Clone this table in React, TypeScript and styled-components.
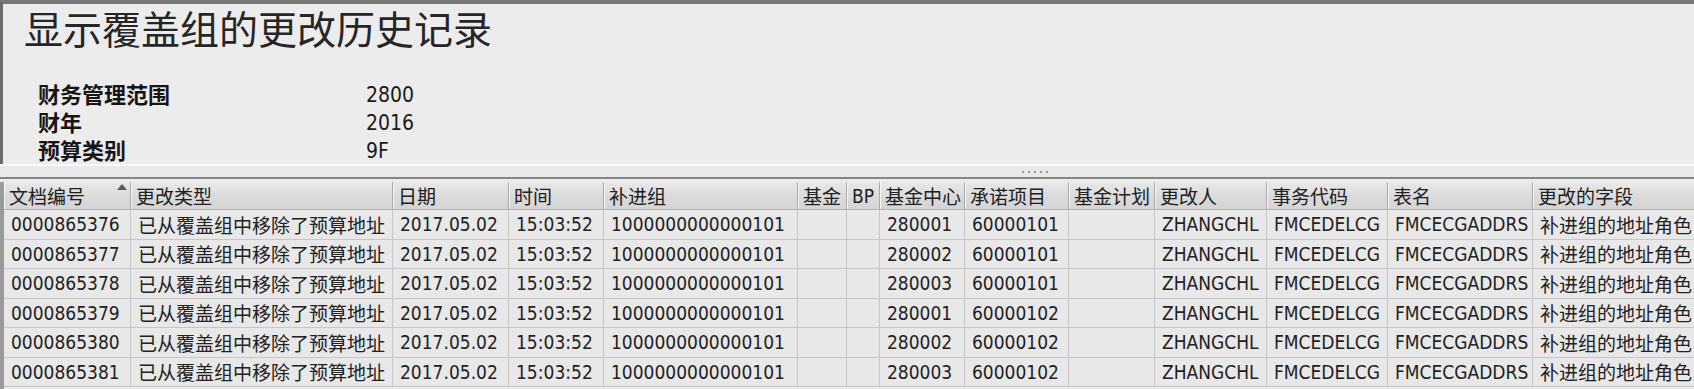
import React from 'react';
import styled, { createGlobalStyle } from 'styled-components';

const GlobalStyle = createGlobalStyle`
  html, body {
    margin: 0;
    padding: 0;
    background: #ececec;
    overflow: hidden;
  }
`;

const cjk = `"Noto Sans CJK SC", "Noto Sans", sans-serif`;
const ui = `"DejaVu Sans Condensed", "Noto Sans CJK SC", "DejaVu Sans", sans-serif`;

const Page = styled.div`
  width: 1694px;
  height: 389px;
  display: flex;
  flex-direction: column;
  overflow: hidden;
  background: #ececec;
  color: #1e1e1e;
`;

const HeaderPanel = styled.div`
  height: 160px;
  box-sizing: content-box;
  border-top: 4px solid #787878;
  border-left: 3px solid #6c6c6c;
  padding-left: 21px;
  display: flex;
  flex-direction: column;
`;

const Title = styled.h1`
  margin: 1px 0 0 0;
  font-family: ${cjk};
  font-weight: 400;
  font-size: 39px;
  line-height: 44px;
  color: #262626;
`;

const InfoGrid = styled.div`
  margin-top: 30px;
  padding-left: 14px;
  display: grid;
  grid-template-columns: 328px auto;
  grid-auto-rows: 28px;
  align-items: center;
`;

const InfoLabel = styled.div`
  font-family: ${cjk};
  font-weight: 700;
  font-size: 22px;
  line-height: 26px;
  color: #161616;
`;

const InfoValue = styled.div`
  font-family: ${ui};
  font-size: 21px;
  line-height: 26px;
  padding-top: 3px;
  color: #1a1a1a;
`;

const Splitter = styled.div`
  height: 11px;
  box-sizing: content-box;
  border-top: 2px solid #fbfbfb;
  border-bottom: 2px solid #858585;
  margin-bottom: 3px;
  background: #e9e9e9;
  display: flex;
  align-items: center;
`;

const Grip = styled.div`
  margin-left: 1022px;
  display: flex;
  gap: 4px;
`;

const GripDot = styled.span`
  width: 2px;
  height: 2px;
  background: #9a9a9a;
`;

const TableWrap = styled.div`
  flex: 1;
  border-left: 4px solid #9a9a9a;
  overflow: hidden;
`;

const widths = [127, 262, 116, 95, 194, 49, 33, 85, 104, 86, 112, 121, 145, 170];

const Grid = styled.div`
  display: grid;
  grid-template-columns: ${widths.map(w => `${w}px`).join(' ')};
  grid-template-rows: 28px;
  grid-auto-rows: 29.5px;
  width: max-content;
`;

const HeadCell = styled.div`
  position: relative;
  box-sizing: border-box;
  display: flex;
  align-items: center;
  padding-left: 5px;
  white-space: nowrap;
  overflow: hidden;
  font-family: ${ui};
  font-size: 19px;
  color: #202020;
  background: linear-gradient(#e9e9e9, #dadada 55%, #d4d4d4);
  border-right: 1px solid #a9a9a9;
  border-bottom: 1px solid #b4b4b4;
  box-shadow: inset 1px 0 0 #f6f6f6;
`;

const SortMark = styled.span`
  position: absolute;
  right: 3px;
  top: 2px;
  width: 0;
  height: 0;
  border-left: 5px solid transparent;
  border-right: 5px solid transparent;
  border-bottom: 6px solid #5a5a5a;
`;

const Cell = styled.div`
  box-sizing: border-box;
  display: flex;
  align-items: center;
  padding-left: 7px;
  white-space: nowrap;
  overflow: hidden;
  font-family: ${ui};
  font-size: 19px;
  color: #222;
  background: #e8e8e8;
  border-right: 1px solid #c6c6c6;
  border-bottom: 1px solid #c6c6c6;
`;

const columns = [
  '文档编号', '更改类型', '日期', '时间', '补进组', '基金', 'BP', '基金中心',
  '承诺项目', '基金计划', '更改人', '事务代码', '表名', '更改的字段',
];

const records = [
  ['0000865376', '280001', '60000101'],
  ['0000865377', '280002', '60000101'],
  ['0000865378', '280003', '60000101'],
  ['0000865379', '280001', '60000102'],
  ['0000865380', '280002', '60000102'],
  ['0000865381', '280003', '60000102'],
];

const toRow = ([doc, center, item]: string[]) => [
  doc, '已从覆盖组中移除了预算地址', '2017.05.02', '15:03:52', '1000000000000101',
  '', '', center, item, '', 'ZHANGCHL', 'FMCEDELCG', 'FMCECGADDRS', '补进组的地址角色',
];

const info = [
  ['财务管理范围', '2800'],
  ['财年', '2016'],
  ['预算类别', '9F'],
];

export default function App() {
  return (
    <Page>
      <GlobalStyle />
      <HeaderPanel>
        <Title>显示覆盖组的更改历史记录</Title>
        <InfoGrid>
          {info.map(([label, value]) => (
            <React.Fragment key={label}>
              <InfoLabel>{label}</InfoLabel>
              <InfoValue>{value}</InfoValue>
            </React.Fragment>
          ))}
        </InfoGrid>
      </HeaderPanel>
      <Splitter>
        <Grip>
          {[0, 1, 2, 3, 4].map(i => <GripDot key={i} />)}
        </Grip>
      </Splitter>
      <TableWrap>
        <Grid>
          {columns.map((c, i) => (
            <HeadCell key={c}>
              {c}
              {i === 0 && <SortMark />}
            </HeadCell>
          ))}
          {records.map(r => toRow(r).map((v, i) => <Cell key={`${r[0]}-${i}`}>{v}</Cell>))}
        </Grid>
      </TableWrap>
    </Page>
  );
}
